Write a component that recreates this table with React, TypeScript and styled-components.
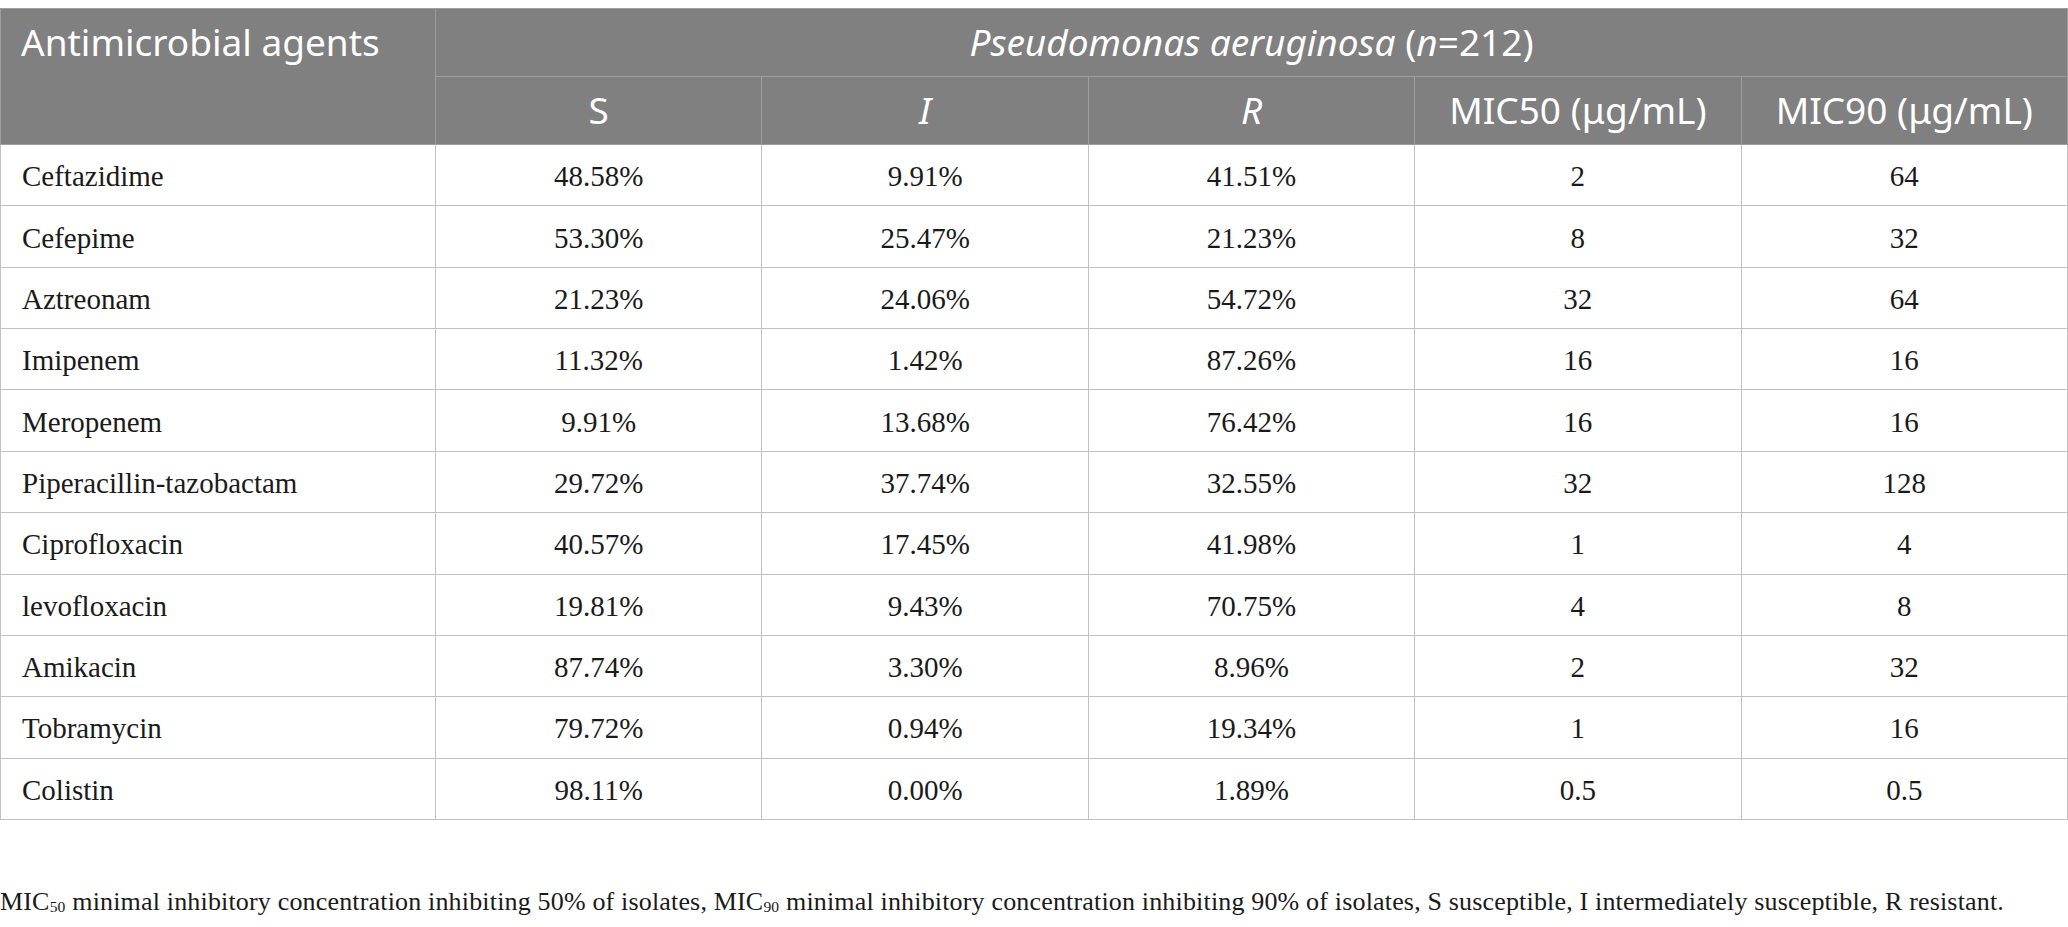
import React from 'react'
import styled, { createGlobalStyle } from 'styled-components'

type Row = [ string, string, string, string, string, string ]

const rows: Row[] = [
  [ 'Ceftazidime', '48.58%', '9.91%', '41.51%', '2', '64' ],
  [ 'Cefepime', '53.30%', '25.47%', '21.23%', '8', '32' ],
  [ 'Aztreonam', '21.23%', '24.06%', '54.72%', '32', '64' ],
  [ 'Imipenem', '11.32%', '1.42%', '87.26%', '16', '16' ],
  [ 'Meropenem', '9.91%', '13.68%', '76.42%', '16', '16' ],
  [ 'Piperacillin-tazobactam', '29.72%', '37.74%', '32.55%', '32', '128' ],
  [ 'Ciprofloxacin', '40.57%', '17.45%', '41.98%', '1', '4' ],
  [ 'levofloxacin', '19.81%', '9.43%', '70.75%', '4', '8' ],
  [ 'Amikacin', '87.74%', '3.30%', '8.96%', '2', '32' ],
  [ 'Tobramycin', '79.72%', '0.94%', '19.34%', '1', '16' ],
  [ 'Colistin', '98.11%', '0.00%', '1.89%', '0.5', '0.5' ],
]

const App = () => {
  return (
    <Page>
      <GlobalStyle/>
      <Table>
        <colgroup>
          <col style={{ width: 435 }}/>
          {[ 0, 1, 2, 3, 4 ].map( i => <col key={i}/> )}
        </colgroup>
        <thead>
          <HeadRow>
            <AgentHead rowSpan={2}>Antimicrobial agents</AgentHead>
            <Head colSpan={5}>
              <i>Pseudomonas aeruginosa</i> (<i>n</i>=212)
            </Head>
          </HeadRow>
          <HeadRow>
            <Head>S</Head>
            <Head><i>I</i></Head>
            <Head><i>R</i></Head>
            <Head>MIC50 (μg/mL)</Head>
            <Head>MIC90 (μg/mL)</Head>
          </HeadRow>
        </thead>
        <tbody>
          {rows.map( row =>
            <BodyRow key={row[0]}>
              {row.map( ( value, i ) =>
                <Cell key={i} $name={i === 0}>{value}</Cell>
              )}
            </BodyRow>
          )}
        </tbody>
      </Table>
      <Note>
        MIC<sub>50</sub> minimal inhibitory concentration inhibiting 50% of isolates, MIC<sub>90</sub> minimal
        inhibitory concentration inhibiting 90% of isolates, S susceptible, I intermediately susceptible,
        R resistant.
      </Note>
    </Page>
  )
}

const GlobalStyle = createGlobalStyle`
  html, body {
    margin: 0;
    padding: 0;
    background: #ffffff;
  }
`

const Page = styled.div`
  width: 2068px;
  padding-top: 8px;
`

const Table = styled.table`
  width: 2068px;
  border-collapse: collapse;
  table-layout: fixed;
  border: 1px solid #b8b8b8;
`

const HeadRow = styled.tr`
  height: 68px;
`

const BodyRow = styled.tr`
  height: 61.36px;
`

const Head = styled.th`
  background-color: #7f807f;
  color: #ffffff;
  font-family: "Noto Sans", "Open Sans", sans-serif;
  font-weight: 400;
  font-size: 37px;
  line-height: 1.2;
  padding: 0 10px;
  text-align: center;
  vertical-align: middle;
  border: 1px solid #9d9e9d;
  white-space: nowrap;
`

const AgentHead = styled( Head )`
  text-align: left;
  vertical-align: top;
  padding: 11px 20px 0;
`

const Cell = styled.td<{ $name?: boolean }>`
  padding: 4px ${p => p.$name ? '21px' : '8px'} 0;
  font-family: "Liberation Serif", "Times New Roman", serif;
  font-size: 29px;
  line-height: 1.1;
  color: #1a1a1a;
  text-align: ${p => p.$name ? 'left' : 'center'};
  vertical-align: middle;
  border: 1px solid #c2c2c2;
  white-space: nowrap;
`

const Note = styled.p`
  margin: 67px 0 0;
  font-family: "Liberation Serif", "Times New Roman", serif;
  font-size: 26px;
  line-height: 30px;
  letter-spacing: 0.17px;
  color: #1a1a1a;
  white-space: nowrap;

  sub {
    font-size: 0.6em;
    vertical-align: -0.15em;
    line-height: 0;
  }
`

export default App
